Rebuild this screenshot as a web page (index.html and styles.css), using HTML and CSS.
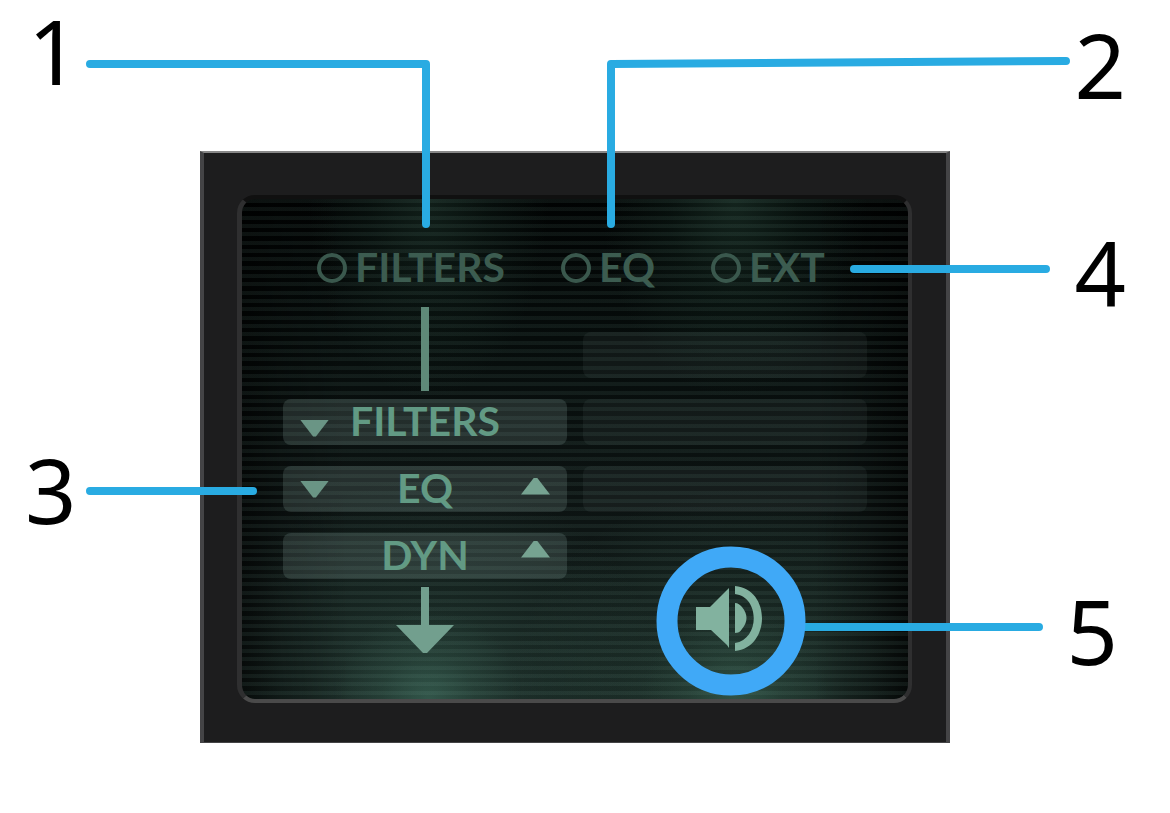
FILE: index.html
```
<!DOCTYPE html>
<html lang="en">
<head>
<meta charset="utf-8">
<title>Signal flow display</title>
<link rel="stylesheet" href="styles.css">
</head>
<body>
<main class="figure">
  <section class="device">
    <div class="screen">
      <div class="sources">
        <label class="source"><input type="radio" name="source" value="filters">FILTERS</label>
        <label class="source"><input type="radio" name="source" value="eq">EQ</label>
        <label class="source"><input type="radio" name="source" value="ext">EXT</label>
      </div>
      <div class="columns">
        <div class="chain">
          <div class="stem"></div>
          <div class="slots">
            <div class="slot active">
              <button class="move down low" aria-label="Move filters down"></button>
              <span class="name">FILTERS</span>
            </div>
            <div class="slot active">
              <button class="move down" aria-label="Move EQ down"></button>
              <span class="name">EQ</span>
              <button class="move up" aria-label="Move EQ up"></button>
            </div>
            <div class="slot active">
              <span class="name">DYN</span>
              <button class="move up high" aria-label="Move dynamics up"></button>
            </div>
          </div>
          <svg class="arrow" viewBox="0 0 58 67" aria-hidden="true"><path d="M25 0h8v38h25L31 66h-4L0 38h25z"/></svg>
        </div>
        <div class="side">
          <div class="slots">
            <div class="slot"></div>
            <div class="slot"></div>
            <div class="slot"></div>
          </div>
          <button class="speaker" aria-label="Listen">
            <svg viewBox="0 0 66 66" aria-hidden="true"><path d="M0 22h14L31 5l2-2v60l-2-3-16-15H0zM39 18c3 0 5 2 7 4 6 7 6 15 0 22-2 3-4 4-7 4zM39 1c36 3 36 61 0 65v-8c25-4 25-46 0-49z"/></svg>
          </button>
        </div>
      </div>
    </div>
  </section>
  <svg class="leaders" viewBox="0 0 1170 813" aria-hidden="true">
    <path d="M90 64H426V224M611 224V64L1066 61M854 269H1046M90 491H253M804 627H1039"/>
    <circle cx="731" cy="621" r="64"/>
  </svg>
  <span class="number one">1</span>
  <span class="number two">2</span>
  <span class="number three">3</span>
  <span class="number four">4</span>
  <span class="number five">5</span>
</main>
</body>
</html>
```
FILE: styles.css
```
* { box-sizing: border-box; }

body {
  margin: 0;
  background: #fff;
}

.figure {
  position: relative;
  padding: 151px 220px 70px 200px;
}

.device {
  padding: 42px 34px 39px 33px;
  background: #1d1d1e;
  border: solid #444446;
  border-width: 2px 4px 1px;
  border-top-color: #888;
}

.screen {
  min-height: 508px;
  border: solid #2f2f30;
  border-width: 4px 4px 4px 5px;
  border-top-color: #101010;
  border-bottom-color: #4a4a4a;
  border-radius: 18px;
  padding: 0 41px;
  background:
    repeating-linear-gradient(rgba(130, 180, 165, 0.09) 0 4px, transparent 4px 0.8333%, transparent 0.8333% 1.6667%),
    linear-gradient(90deg, rgba(0, 0, 0, 0.65), rgba(0, 0, 0, 0.3) 6%, transparent 16%, transparent 86%, rgba(0, 0, 0, 0.35) 94%, rgba(0, 0, 0, 0.75)),
    radial-gradient(14% 18% at 28% 100%, rgba(66, 115, 98, 0.45), rgba(60, 105, 88, 0.18) 50%, transparent),
    radial-gradient(36% 44% at 28% 100%, rgba(54, 92, 79, 0.5), rgba(48, 82, 70, 0.22) 50%, transparent),
    radial-gradient(14% 18% at 74% 100%, rgba(66, 115, 96, 0.4), rgba(60, 105, 86, 0.14) 50%, transparent),
    radial-gradient(34% 42% at 74% 100%, rgba(54, 92, 76, 0.5), rgba(48, 82, 68, 0.22) 50%, transparent),
    radial-gradient(18% 40% at 28% 0%, rgba(22, 40, 33, 0.75), rgba(18, 36, 29, 0.35) 50%, transparent),
    radial-gradient(20% 40% at 74% 0%, rgba(24, 44, 36, 0.8), rgba(18, 38, 30, 0.35) 50%, transparent),
    linear-gradient(#010303, #060c0b 28%, #0c1312 60%, #121c1a);
  background-clip: padding-box;
  background-origin: padding-box;
  font: 700 41px/48px Lato, sans-serif;
}

.sources {
  display: flex;
  gap: 56px;
  height: 108px;
  padding: 44px 34px 0;
}

.source {
  display: flex;
  gap: 8px;
  height: 48px;
  color: #3c5c50;
}

.source input {
  appearance: none;
  width: 30px;
  height: 30px;
  margin: 10px 0 0;
  border: 4px solid #3a584d;
  border-radius: 50%;
}

.columns {
  display: grid;
  grid-template-columns: 1fr 1fr;
  gap: 16px;
}

.chain {
  display: flex;
  flex-direction: column;
  align-items: center;
  gap: 8px;
}

.stem {
  width: 8px;
  height: 84px;
  background: #5f8978;
}

.slots {
  display: flex;
  flex-direction: column;
  align-self: stretch;
  gap: 21px;
}

.slot {
  display: grid;
  grid-template-columns: 29px 1fr 29px;
  align-items: center;
  height: 46px;
  padding: 0 17px;
  border-radius: 8px;
  background: rgba(190, 210, 205, 0.06);
}

.slot.active { background: rgba(165, 195, 188, 0.17); }

.name {
  grid-column: 2;
  height: 46px;
  line-height: 44px;
  text-align: center;
  color: #629a84;
}

.move {
  width: 29px;
  height: 17px;
  padding: 0;
  border: 0;
  background: #76a391;
}

.down {
  clip-path: polygon(0 0, 100% 0, 55% 100%, 45% 100%);
  background: #6a9585;
}

.up {
  margin-bottom: 6px;
  clip-path: polygon(45% 0, 55% 0, 100% 100%, 0 100%);
}

.low { margin-top: 12px; }
.high { margin-bottom: 14px; }

.arrow {
  width: 58px;
  height: 67px;
  fill: #729f8e;
}

.side { padding-top: 25px; }

.speaker {
  display: block;
  box-sizing: content-box;
  width: 66px;
  height: 66px;
  margin: 73px auto 0;
  padding: 0 0 0 8px;
  border: 0;
  background: none;
}

.speaker svg {
  display: block;
  fill: #82b29f;
}

.leaders {
  position: absolute;
  top: 0;
  left: 0;
  width: 100%;
  pointer-events: none;
  fill: none;
  stroke: #29abe2;
  stroke-width: 8;
  stroke-linecap: round;
  stroke-linejoin: round;
}

.leaders circle {
  stroke: #40a9f7;
  stroke-width: 21;
}

.number {
  position: absolute;
  font: 400 90px/100px "Noto Sans", sans-serif;
  color: #000;
}

.one { top: 0; left: 28px; }
.two { top: 14px; right: 44px; }
.three { top: 439px; left: 25px; }
.four { top: 222px; right: 44px; }
.five { top: 580px; right: 52px; }
```
